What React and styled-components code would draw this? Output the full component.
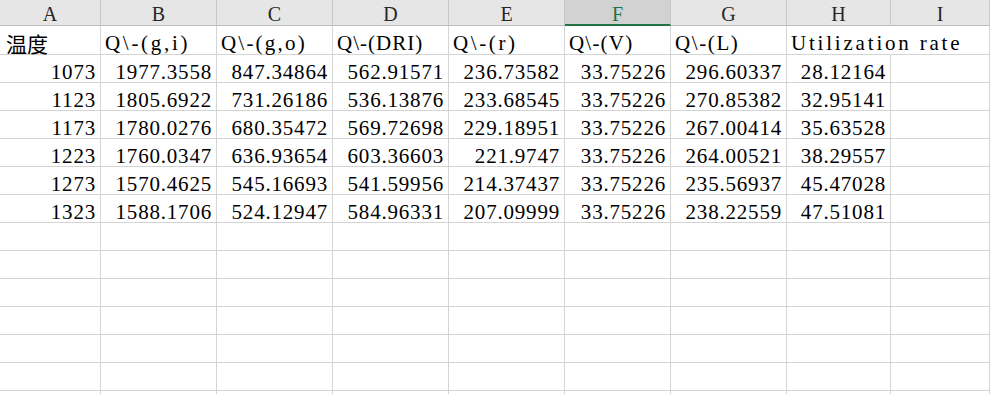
import React from 'react';
import styled, { createGlobalStyle } from 'styled-components';

// column widths include the 1px right grid line
const columns = [
    { key: 'A', width: 101 },
    { key: 'B', width: 116 },
    { key: 'C', width: 116 },
    { key: 'D', width: 116 },
    { key: 'E', width: 116 },
    { key: 'F', width: 106, selected: true },
    { key: 'G', width: 116 },
    { key: 'H', width: 104 },
    { key: 'I', width: 99 },
];

// spacing spreads the serif text to the fixed pitch of the sheet font
const titles = [
    { text: '温度', cjk: true },
    { text: 'Q\\-(g,i)', spacing: 2.7 },
    { text: 'Q\\-(g,o)', spacing: 2.2 },
    { text: 'Q\\-(DRI)', spacing: 1.0 },
    { text: 'Q\\-(r)', spacing: 2.6 },
    { text: 'Q\\-(V)', spacing: 1.2 },
    { text: 'Q\\-(L)', spacing: 1.6 },
    { text: 'Utilization rate', spacing: 2.8, spill: true },
    { text: '' },
];

const data = [
    ['1073', '1977.3558', '847.34864', '562.91571', '236.73582', '33.75226', '296.60337', '28.12164'],
    ['1123', '1805.6922', '731.26186', '536.13876', '233.68545', '33.75226', '270.85382', '32.95141'],
    ['1173', '1780.0276', '680.35472', '569.72698', '229.18951', '33.75226', '267.00414', '35.63528'],
    ['1223', '1760.0347', '636.93654', '603.36603', '221.9747', '33.75226', '264.00521', '38.29557'],
    ['1273', '1570.4625', '545.16693', '541.59956', '214.37437', '33.75226', '235.56937', '45.47028'],
    ['1323', '1588.1706', '524.12947', '584.96331', '207.09999', '33.75226', '238.22559', '47.51081'],
];

const emptyRows = 8;

const GlobalStyle = createGlobalStyle`
    html, body {
        margin: 0;
        padding: 0;
        background: #ffffff;
        overflow: hidden;
    }
`;

const Sheet = styled.div`
    width: 990px;
    height: 394px;
    overflow: hidden;
    display: grid;
    grid-template-columns: ${columns.map((c) => `${c.width}px`).join(' ')};
    grid-template-rows: 26px 29px;
    grid-auto-rows: 28px;
    font-family: "Liberation Serif", "Noto Sans CJK SC", serif;
    font-size: 21px;
    color: #000000;
`;

const HeadCell = styled.div`
    box-sizing: border-box;
    display: flex;
    align-items: center;
    justify-content: center;
    padding-top: 3px;
    background: ${(p) => (p.$selected ? '#d2d2d2' : '#e6e6e6')};
    color: ${(p) => (p.$selected ? '#217346' : '#262626')};
    border-right: 1px solid #c8c8c8;
    border-bottom: ${(p) => (p.$selected ? '2px solid #217346' : '1px solid #bdbdbd')};
    font-size: 20px;
    line-height: 20px;
`;

const Cell = styled.div`
    box-sizing: border-box;
    display: flex;
    align-items: flex-end;
    justify-content: ${(p) => (p.$right ? 'flex-end' : 'flex-start')};
    padding: 0 ${(p) => (p.$right ? '4px' : '0')} ${(p) => (p.$title ? '1px' : '0')} ${(p) => (p.$right ? '0' : '4px')};
    border-right: ${(p) => (p.$spill ? '1px solid transparent' : '1px solid #d4d4d4')};
    border-bottom: 1px solid #d4d4d4;
    line-height: 20px;
    letter-spacing: ${(p) => (p.$spacing != null ? `${p.$spacing}px` : '0.8px')};
    white-space: nowrap;
    position: relative;
    z-index: ${(p) => (p.$spill ? 1 : 0)};
`;

const Cjk = styled.span`
    font-family: "Noto Sans CJK SC", sans-serif;
    font-size: 21px;
    letter-spacing: 0;
    margin-left: 2px;
`;

function App() {
    return (
        <>
            <GlobalStyle />
            <Sheet>
                {columns.map((c) => (
                    <HeadCell key={c.key} $selected={c.selected}>{c.key}</HeadCell>
                ))}

                {titles.map((t, i) => (
                    <Cell key={`t${i}`} $title $spill={t.spill} $spacing={t.spacing ?? 0}>
                        {t.cjk ? <Cjk>{t.text}</Cjk> : t.text}
                    </Cell>
                ))}

                {data.map((row, r) =>
                    columns.map((c, i) => (
                        <Cell key={`${r}-${c.key}`} $right>{row[i] || ''}</Cell>
                    ))
                )}

                {Array.from({ length: emptyRows }).map((_, r) =>
                    columns.map((c) => <Cell key={`e${r}-${c.key}`} />)
                )}
            </Sheet>
        </>
    );
}

export default App;
